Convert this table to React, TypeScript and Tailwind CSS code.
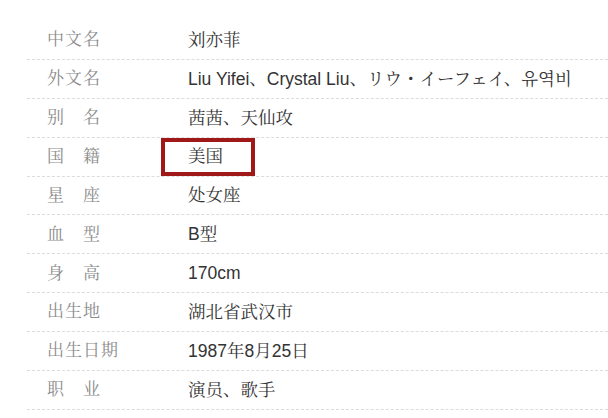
const rows: [string, string][] = [
  ["中文名", "刘亦菲"],
  ["外文名", "Liu Yifei、Crystal Liu、リウ・イーフェイ、유역비"],
  ["别　名", "茜茜、天仙攻"],
  ["国　籍", "美国"],
  ["星　座", "处女座"],
  ["血　型", "B型"],
  ["身　高", "170cm"],
  ["出生地", "湖北省武汉市"],
  ["出生日期", "1987年8月25日"],
  ["职　业", "演员、歌手"],
];

export default function App() {
  return (
    <main className="h-[418px] w-[608px] overflow-hidden bg-white pt-[21px] pl-[27px] font-['Liberation_Sans','Noto_Serif_CJK_SC','Noto_Sans_CJK_SC',sans-serif]">
      <div className="relative">
        {rows.map(([label, value]) => (
          <div
            key={label}
            className="flex h-[38.9px] items-center border-b border-dashed border-[#dcdcdc]"
          >
            <div className="w-[161px] pl-[20px] text-[17px] tracking-[1px] text-[#8c8c8c]">
              {label}
            </div>
            <div className="whitespace-nowrap text-[17.5px] text-[#333]">{value}</div>
          </div>
        ))}
        {/* highlight box around 国籍 value */}
        <div className="absolute left-[134px] top-[117px] h-[38px] w-[94px] border-[4px] border-[#a01818]" />
      </div>
    </main>
  );
}
